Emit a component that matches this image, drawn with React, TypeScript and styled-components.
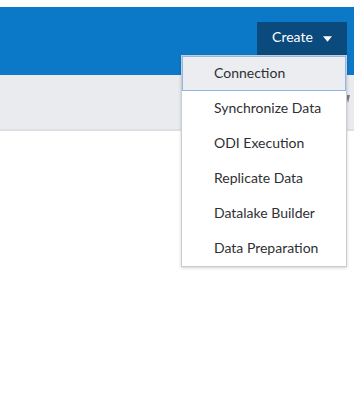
import styled, { createGlobalStyle } from 'styled-components';

const GlobalStyle = createGlobalStyle`
  html, body {
    margin: 0;
    padding: 0;
    background: #ffffff;
    font-family: Lato, "Open Sans", sans-serif;
  }
`;

const items = ['Connection', 'Synchronize Data', 'ODI Execution', 'Replicate Data', 'Datalake Builder', 'Data Preparation'];

export default function App() {
  return (
    <>
      <GlobalStyle />
      <S.Page>
        <S.Header>
          <S.CreateWrap>
            <S.CreateButton>
              Create
              <S.Caret viewBox="0 0 10 6" aria-hidden="true">
                <path d="M0 0 L10 0 L5 6 Z" fill="#ffffff" />
              </S.Caret>
            </S.CreateButton>
            <S.Menu>
              {items.map((item, index) => (
                <S.MenuItem key={item} active={index === 0}>
                  {item}
                </S.MenuItem>
              ))}
            </S.Menu>
          </S.CreateWrap>
        </S.Header>
        <S.FilterBar>
          <S.SortMark viewBox="0 0 6 10" aria-hidden="true">
            <path d="M1 1 L5 1 L3 9 Z" fill="#7a7c80" />
          </S.SortMark>
        </S.FilterBar>
      </S.Page>
    </>
  );
}

const S = {
  Page: styled.div`
    padding-top: 7px;
    min-height: 407px;
    box-sizing: border-box;
  `,
  Header: styled.div`
    height: 68px;
    background: #0b79c8;
    display: flex;
    justify-content: flex-end;
    align-items: flex-start;
    padding: 15px 7px 0 0;
    box-sizing: border-box;
  `,
  CreateWrap: styled.div`
    position: relative;
  `,
  CreateButton: styled.div`
    width: 90px;
    height: 33px;
    background: #0b4a7d;
    color: #ffffff;
    font-size: 14px;
    display: flex;
    align-items: center;
    justify-content: center;
    gap: 10px;
    padding: 0 0 4px 0;
    box-sizing: border-box;
  `,
  Caret: styled.svg`
    width: 9px;
    height: 6px;
    margin-top: 4px;
  `,
  Menu: styled.div`
    position: absolute;
    top: 33px;
    right: 0;
    width: 166px;
    background: #ffffff;
    border: 1px solid #c9ccd1;
    box-shadow: 0 1px 3px rgba(0, 0, 0, 0.18);
    box-sizing: border-box;
    z-index: 2;
  `,
  MenuItem: styled.div<{ active?: boolean }>`
    height: 35px;
    display: flex;
    align-items: center;
    padding: 0 0 3px 31px;
    font-size: 14px;
    color: #2f3033;
    box-sizing: border-box;
    background: ${(p) => (p.active ? '#ebedf0' : 'transparent')};
    border: 1px solid ${(p) => (p.active ? '#8fb6e6' : 'transparent')};
  `,
  FilterBar: styled.div`
    height: 56px;
    background: #eaebef;
    border-bottom: 2px solid #dfe0e4;
    box-sizing: border-box;
    display: flex;
    justify-content: flex-end;
    align-items: center;
    padding-right: 3px;
  `,
  SortMark: styled.svg`
    width: 6px;
    height: 10px;
    margin-top: -6px;
  `,
};
